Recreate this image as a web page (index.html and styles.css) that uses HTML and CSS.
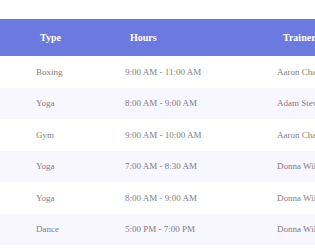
FILE: index.html
```html
<!DOCTYPE html>
<html>
<head>
<meta charset="utf-8">
<link rel="stylesheet" href="styles.css">
</head>
<body>
<div class="wrap">
<table class="sched">
  <colgroup><col class="c1"><col class="c2"><col class="c3"></colgroup>
  <thead>
    <tr><th>Type</th><th class="h2">Hours</th><th class="h3">Trainer</th></tr>
  </thead>
  <tbody>
    <tr><td>Boxing</td><td>9:00 AM - 11:00 AM</td><td>Aaron Chapman</td></tr>
    <tr><td>Yoga</td><td>8:00 AM - 9:00 AM</td><td>Adam Stewart</td></tr>
    <tr><td>Gym</td><td>9:00 AM - 10:00 AM</td><td>Aaron Chapman</td></tr>
    <tr><td>Yoga</td><td>7:00 AM - 8:30 AM</td><td>Donna Wilson</td></tr>
    <tr><td>Yoga</td><td>8:00 AM - 9:00 AM</td><td>Donna Wilson</td></tr>
    <tr><td>Dance</td><td>5:00 PM - 7:00 PM</td><td>Donna Wilson</td></tr>
  </tbody>
</table>
</div>
</body>
</html>
```
FILE: styles.css
```css
html, body {
  margin: 0;
  padding: 0;
  background: #ffffff;
}
.wrap {
  padding-top: 19px;
  width: 315px;
  overflow: hidden;
}
.sched {
  border-collapse: collapse;
  width: 420px;
  table-layout: fixed;
  font-family: "Liberation Serif", "Times New Roman", serif;
}
.c1 { width: 89px; }
.c2 { width: 152px; }
.c3 { width: 179px; }
.sched th {
  background: #6c7ae0;
  color: #ffffff;
  font-size: 10px;
  font-weight: bold;
  text-align: left;
  height: 37px;
  padding: 0 0 0 40px;
  white-space: nowrap;
}
.sched th.h2 { padding-left: 41px; }
.sched th.h3 { padding-left: 42px; }
.sched td {
  color: #808080;
  font-size: 9px;
  height: 31.5px;
  padding: 0 0 0 36px;
  white-space: nowrap;
}
.sched tbody tr:nth-child(even) td {
  background: #f8f6ff;
}
```
